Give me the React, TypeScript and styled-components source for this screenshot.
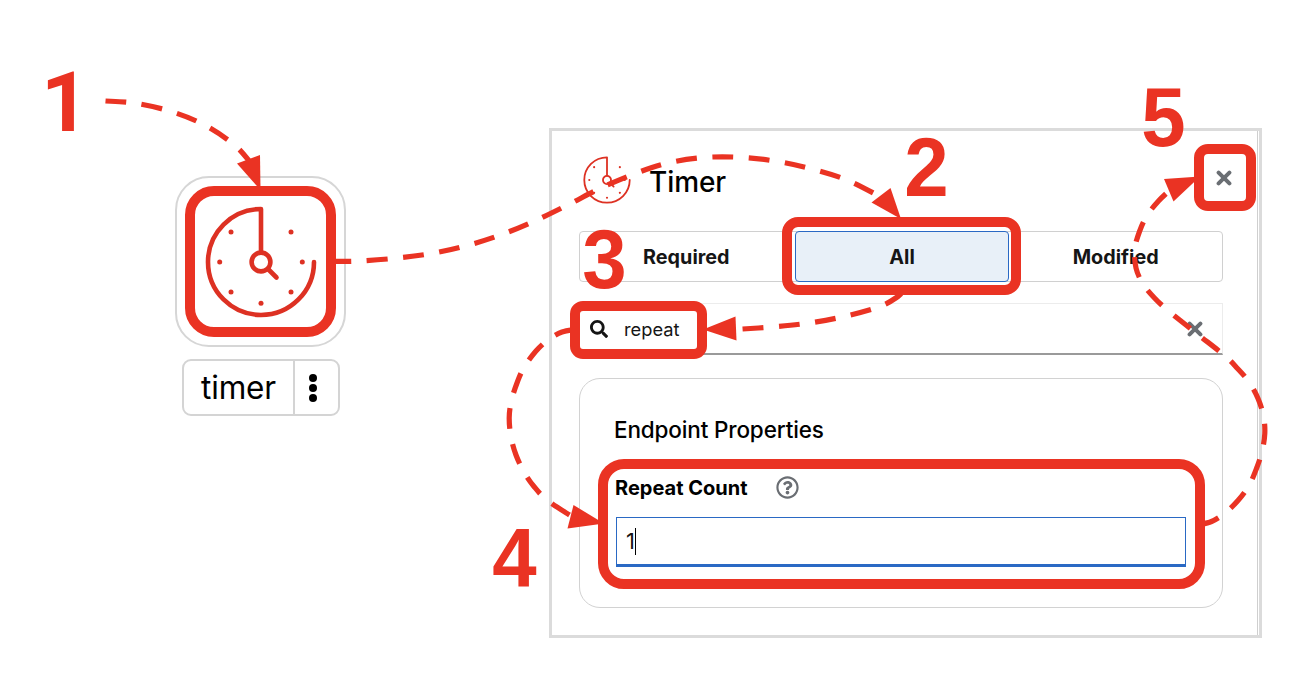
import React from "react";
import styled, { createGlobalStyle } from "styled-components";
import { FaSearch, FaRegQuestionCircle } from "react-icons/fa";

const RED = "#ea3323";

const GlobalStyle = createGlobalStyle`
  *, *::before, *::after { box-sizing: border-box; }
  body { margin: 0; background: #fff; font-family: Inter, "Liberation Sans", sans-serif; color: #151515; }
`;

const Stage = styled.main`
  position: relative;
  display: flex;
  align-items: flex-start;
  width: 1312px;
  height: 674px;
  overflow: hidden;
  background: #fff;
`;

const NodeColumn = styled.section`
  display: flex;
  flex-direction: column;
  align-items: center;
  width: 171px;
  margin: 176px 203px 0 175px;
`;

const NodeBox = styled.div`
  display: flex;
  align-items: center;
  justify-content: center;
  width: 171px;
  height: 171px;
  padding-top: 1px;
  border: 2px solid #d6d6d6;
  border-radius: 34px;
`;

const NodeLabel = styled.div`
  display: flex;
  width: 158px;
  height: 57px;
  margin-top: 12px;
  border: 2px solid #d4d4d4;
  border-radius: 9px;
`;

const NodeName = styled.span`
  display: flex;
  align-items: center;
  justify-content: center;
  width: 111px;
  padding-left: 1px;
  border-right: 2px solid #d4d4d4;
  font: 400 31.5px/1 Inter, sans-serif;
  letter-spacing: -0.2px;
  color: #000;
`;

const KebabButton = styled.button`
  display: flex;
  flex: 1;
  flex-direction: column;
  align-items: center;
  justify-content: center;
  gap: 1.8px;
  padding: 1px 6px 0 0;
  border: 0;
  background: none;
`;

const KebabDot = styled.i`
  width: 8.4px;
  height: 8.4px;
  border-radius: 50%;
  background: #000;
`;

const Panel = styled.section`
  display: flex;
  width: 713px;
  height: 510px;
  margin-top: 128px;
  border: 3px solid #dbdbdb;
`;

const PanelBody = styled.div`
  display: flex;
  flex: 1;
  flex-direction: column;
  align-items: flex-start;
  margin-right: 1px;
  padding: 23px 0 0 27px;
  border-right: 1px solid #cfcfcf;
`;

const PanelHeader = styled.header`
  display: flex;
  align-items: center;
  width: 653px;
  height: 52px;
  padding-left: 4px;
`;

const Title = styled.h1`
  flex: 1;
  margin: 3px 0 0 18px;
  font: 500 28px/1 Inter, sans-serif;
  letter-spacing: -0.1px;
  color: #000;
`;

const IconButton = styled.button`
  display: flex;
  padding: 0 0 4px;
  border: 0;
  background: none;
  color: #6a6e73;
`;

const Tabs = styled.div`
  display: flex;
  width: 644px;
  height: 51px;
  margin-top: 25px;
  border: 1px solid #d0d0d0;
  border-radius: 4px;
`;

const Tab = styled.button<{ $active?: boolean }>`
  flex: 1;
  margin: ${(p) => (p.$active ? "-1px 0 -1px 2px" : "0")};
  padding: 2px 0 0;
  border: ${(p) => (p.$active ? "1px solid #2a69c4" : "0")};
  border-radius: 4px;
  background: ${(p) => (p.$active ? "#e8f0f8" : "transparent")};
  font: 700 19.8px/1 Inter, sans-serif;
  color: #151515;
`;

const SearchField = styled.div`
  display: flex;
  align-items: center;
  width: 644px;
  height: 52px;
  margin-top: 21px;
  padding: 1px 19px 0 10px;
  border: 1px solid #ececec;
  border-bottom: 2px solid #9a9a9a;

  ${IconButton} { padding: 0; }
`;

const SearchText = styled.span`
  flex: 1;
  margin-left: 16px;
  font: 400 18.3px/1 Inter, sans-serif;
`;

const Card = styled.section`
  width: 644px;
  height: 230px;
  margin-top: 23px;
  padding: 38px 34px 0;
  border: 1px solid #d2d2d2;
  border-radius: 21px;
`;

const CardTitle = styled.h2`
  margin: 0;
  font: 500 22.5px/26px Inter, sans-serif;
  letter-spacing: -0.15px;
  color: #000;
`;

const FieldLabel = styled.label`
  display: flex;
  align-items: center;
  height: 24px;
  margin-top: 32px;
  padding: 1px 0 0 1px;
  font: 700 20px/24px Inter, sans-serif;
  color: #000;

  svg { margin: -1px 0 0 29px; color: #6a6e73; }
`;

const NumberInput = styled.div`
  display: flex;
  align-items: center;
  width: 570px;
  height: 50px;
  margin: 18px 0 0 2px;
  padding: 0 0 0 9px;
  border: 1px solid #2a69c4;
  border-bottom-width: 3px;
  font: 400 22px/1 Inter, sans-serif;
`;

const Caret = styled.i`
  width: 1px;
  height: 27px;
  background: #000;
`;

const Connectors = styled.svg`
  position: absolute;
  inset: 0;
`;

const Highlight = styled.div<{ $x: number; $y: number; $w: number; $h: number; $r: number }>`
  position: absolute;
  left: ${(p) => p.$x}px;
  top: ${(p) => p.$y}px;
  width: ${(p) => p.$w}px;
  height: ${(p) => p.$h}px;
  border: 10px solid ${RED};
  border-radius: ${(p) => p.$r}px;
`;

const StepNumber = styled.span<{ $x: number; $y: number; $plain?: boolean }>`
  position: absolute;
  left: ${(p) => p.$x}px;
  top: ${(p) => p.$y}px;
  font: 700 84px/84px ${(p) => (p.$plain ? "Roboto" : '"Liberation Sans"')}, Arial, sans-serif;
  color: ${RED};
  transform: scaleX(${(p) => (p.$plain ? 1 : 0.95)});
`;

type Point = [number, number];

/** Catmull-Rom spline through the points, written as cubic segments. */
function curve(pts: Point[]) {
  let d = `M${pts[0][0]},${pts[0][1]}`;
  for (let i = 0; i < pts.length - 1; i++) {
    const a = pts[Math.max(i - 1, 0)];
    const b = pts[i];
    const c = pts[i + 1];
    const e = pts[Math.min(i + 2, pts.length - 1)];
    d += `C${b[0] + (c[0] - a[0]) / 6},${b[1] + (c[1] - a[1]) / 6} ${c[0] - (e[0] - b[0]) / 6},${c[1] - (e[1] - b[1]) / 6} ${c[0]},${c[1]}`;
  }
  return d;
}

const arrows: { pts: Point[]; head: string }[] = [
  {
    pts: [[105.5, 101], [134, 103], [169.5, 111], [203.5, 124.5], [234, 144.5], [250, 162]],
    head: "237,163.5 260,155 260.5,190",
  },
  {
    pts: [[330.5, 261.5], [359, 261], [395, 258.3], [431.5, 253.5], [467, 245.5], [501.5, 234.6], [535, 220.8], [568, 204.8], [600.5, 188.2], [634, 174], [668, 163], [704, 157.5], [740, 157.3], [776.5, 161.3], [812, 169], [847, 180], [880, 196.5]],
    head: "871.5,202.5 890.5,188 901,219",
  },
  {
    pts: [[902, 292], [898, 296.5], [880, 306.5], [845, 316.3], [809, 323], [773, 326.9], [735, 329.5]],
    head: "735.5,316.5 736.5,340.5 703,329.5",
  },
  {
    pts: [[575, 329.5], [562, 332], [548.5, 339.5], [536, 351], [524, 367.5], [517, 383], [511.3, 401], [509.2, 418], [511, 437], [516, 455], [524, 472], [534, 486.5], [547, 500], [571, 516]],
    head: "573.5,505 567.5,528.5 604,523.5",
  },
  {
    pts: [[1199, 524.5], [1211.5, 521.5], [1225, 513], [1238, 500.5], [1249, 485.5], [1256.5, 468.5], [1262, 451.5], [1264.8, 433.5], [1263.5, 416], [1258, 398.5], [1249, 382], [1237.5, 368.5], [1224.5, 355.5], [1196, 333], [1168, 310.5], [1154.5, 298], [1143, 284], [1136, 268], [1134.8, 249], [1139.5, 231.5], [1147, 215.5], [1158.5, 201], [1170, 190]],
    head: "1164,179 1173.5,201.5 1200,176.5",
  },
];

function TimerIcon({ size, stroke = 4.6 }: { size: number; stroke?: number }) {
  return (
    <svg width={size} height={size} viewBox="-56 -56 112 112" fill="none" stroke="#dd3123" strokeWidth={stroke} strokeLinecap="round" strokeLinejoin="round">
      <path d="M53,0A53,53 0 1 1 0,-53V-10" />
      <circle r="9.4" />
      <path d="M7,7L15.5,15.5" />
      <g fill="#dd3123" stroke="none">
        <circle cx="-30" cy="-30" r="2.5" />
        <circle cx="30" cy="-30" r="2.5" />
        <circle cx="-41.3" cy="0" r="2.5" />
        <circle cx="41.3" cy="0" r="2.5" />
        <circle cx="-30" cy="30" r="2.5" />
        <circle cx="30" cy="30" r="2.5" />
        <circle cx="0" cy="41.3" r="2.5" />
      </g>
    </svg>
  );
}

function Cross() {
  return (
    <svg width="16" height="16" viewBox="0 0 16 16" stroke="currentColor" strokeWidth="4" strokeLinecap="round">
      <path d="M2.6,2.6L13.4,13.4M13.4,2.6L2.6,13.4" />
    </svg>
  );
}

export default function App() {
  return (
    <>
      <GlobalStyle />
      <Stage>
        <NodeColumn>
          <NodeBox>
            <TimerIcon size={112} />
          </NodeBox>
          <NodeLabel>
            <NodeName>timer</NodeName>
            <KebabButton aria-label="Node actions">
              <KebabDot />
              <KebabDot />
              <KebabDot />
            </KebabButton>
          </NodeLabel>
        </NodeColumn>

        <Panel>
          <PanelBody>
            <PanelHeader>
              <TimerIcon size={48} stroke={4.2} />
              <Title>Timer</Title>
              <IconButton aria-label="Close">
                <Cross />
              </IconButton>
            </PanelHeader>
            <Tabs>
              <Tab>Required</Tab>
              <Tab $active>All</Tab>
              <Tab>Modified</Tab>
            </Tabs>
            <SearchField>
              <FaSearch size={18} />
              <SearchText>repeat</SearchText>
              <IconButton aria-label="Clear">
                <Cross />
              </IconButton>
            </SearchField>
            <Card>
              <CardTitle>Endpoint Properties</CardTitle>
              <FieldLabel>
                Repeat Count
                <FaRegQuestionCircle size={23} />
              </FieldLabel>
              <NumberInput>
                1<Caret />
              </NumberInput>
            </Card>
          </PanelBody>
        </Panel>

        <Connectors width="1312" height="674" viewBox="0 0 1312 674">
          {arrows.map((a, i) => (
            <g key={i}>
              <path d={curve(a.pts)} fill="none" stroke={RED} strokeWidth="5.2" strokeDasharray="20.8 15.6" />
              <polygon points={a.head} fill={RED} />
            </g>
          ))}
        </Connectors>

        <Highlight $x={185} $y={186} $w={151} $h={151} $r={29} />
        <Highlight $x={782} $y={217} $w={239} $h={78} $r={16} />
        <Highlight $x={569.5} $y={301} $w={137.5} $h={58} $r={13} />
        <Highlight $x={598} $y={459} $w={607} $h={130} $r={26} />
        <Highlight $x={1194} $y={143.5} $w={62} $h={67} $r={14} />

        <StepNumber $plain $x={41} $y={61}>1</StepNumber>
        <StepNumber $x={903} $y={125}>2</StepNumber>
        <StepNumber $x={581} $y={217}>3</StepNumber>
        <StepNumber $x={491} $y={516}>4</StepNumber>
        <StepNumber $x={1140} $y={75}>5</StepNumber>
      </Stage>
    </>
  );
}
